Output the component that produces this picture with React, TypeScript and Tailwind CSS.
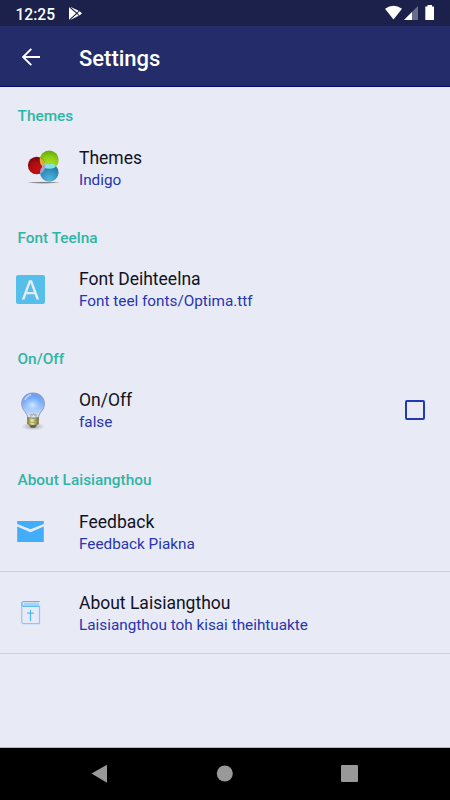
import type { ReactNode } from "react";

function ThemesIcon() {
  return (
    <svg viewBox="0 127 79 81" className="h-[81px] w-[79px] shrink-0">
      <defs>
        <radialGradient id="green" cx="50%" cy="85%" r="85%">
          <stop offset="0" stopColor="#b4ea22" />
          <stop offset=".6" stopColor="#8fcf14" />
          <stop offset="1" stopColor="#62a80a" />
        </radialGradient>
        <radialGradient id="red" cx="55%" cy="75%" r="75%">
          <stop offset="0" stopColor="#c80f14" />
          <stop offset=".6" stopColor="#a90c10" />
          <stop offset="1" stopColor="#780508" />
        </radialGradient>
        <radialGradient id="blue" cx="50%" cy="90%" r="85%">
          <stop offset="0" stopColor="#55b7dc" />
          <stop offset=".6" stopColor="#318fbd" />
          <stop offset="1" stopColor="#1f729f" />
        </radialGradient>
        <radialGradient id="floor">
          <stop offset="0" stopColor="#777" />
          <stop offset=".65" stopColor="#999" />
          <stop offset="1" stopColor="#bbb" stopOpacity="0" />
        </radialGradient>
        <clipPath id="redClip"><circle cx="36.7" cy="165.5" r="8.8" /></clipPath>
        <clipPath id="blueClip"><circle cx="49.3" cy="172.5" r="9.3" /></clipPath>
      </defs>
      <ellipse cx="43.5" cy="182.6" rx="17" ry="1.2" fill="url(#floor)" />
      <circle cx="49.2" cy="160" r="9.5" fill="url(#green)" />
      <circle cx="36.7" cy="165.5" r="8.8" fill="url(#red)" />
      <circle cx="49.3" cy="172.5" r="9.3" fill="url(#blue)" />
      <circle cx="49.2" cy="160" r="9.5" fill="#d8ae35" clipPath="url(#redClip)" />
      <ellipse cx="49.3" cy="166" rx="6.6" ry="2.8" fill="#83e3df" />
      <circle cx="36.7" cy="165.5" r="8.8" fill="#ad9dcc" clipPath="url(#blueClip)" />
    </svg>
  );
}

function FontIcon() {
  return (
    <svg viewBox="0 248 79 81" className="h-[81px] w-[79px] shrink-0">
      <rect x="16" y="274" width="29" height="29" rx="2" fill="#55bfea" />
      <path d="M21.8 298.4 29 279.2H32L39.2 298.4H36.5L34.6 293.2H26.4L24.5 298.4ZM27.2 291H33.8L30.5 281.9Z" fill="#e8eaf6" fillRule="evenodd" />
    </svg>
  );
}

function BulbIcon() {
  return (
    <svg viewBox="0 369 79 81" className="h-[81px] w-[79px] shrink-0">
      <defs>
        <linearGradient id="glass" x1="0" y1="0" x2="0" y2="1">
          <stop offset="0" stopColor="#6b9cf0" />
          <stop offset=".4" stopColor="#80b0fb" />
          <stop offset=".75" stopColor="#b0d0fc" />
          <stop offset="1" stopColor="#e3e8ef" />
        </linearGradient>
        <radialGradient id="glow">
          <stop offset="0" stopColor="#cfe8ff" />
          <stop offset="1" stopColor="#a8d0ff" stopOpacity="0" />
        </radialGradient>
        <linearGradient id="brass">
          <stop offset="0" stopColor="#77712b" />
          <stop offset=".4" stopColor="#eeebad" />
          <stop offset="1" stopColor="#6c6732" />
        </linearGradient>
        <radialGradient id="bulbShadow">
          <stop offset="0" stopColor="#777" stopOpacity=".65" />
          <stop offset="1" stopColor="#888" stopOpacity="0" />
        </radialGradient>
      </defs>
      <ellipse cx="33" cy="425.5" rx="12" ry="4" fill="url(#bulbShadow)" />
      <path d="M27.7 417C27.5 411.5 21.7 409.5 21.7 402.8C21.7 396 26.5 392 33 392S44.4 396 44.4 402.8C44.4 409.5 38.7 411.5 38.4 417Z" fill="url(#glass)" stroke="#9697b3" strokeWidth="1" />
      <ellipse cx="32.5" cy="404" rx="9" ry="8" fill="url(#glow)" />
      <path d="M25 399Q26.5 394.8 31 393.8" fill="none" stroke="#bed8ff" strokeWidth="1.4" />
      <path d="M31 416V413L32.3 414.5 33.5 412.5 34.8 414.5 36 413V416" fill="none" stroke="#a09b84" strokeWidth=".8" />
      <path d="M27.5 416.5Q33 418.5 38.5 416.5V423Q33 426 27.5 423Z" fill="url(#brass)" stroke="#77723d" strokeWidth=".6" />
      <path d="M28 420.5Q33 422.5 38 420.5" fill="none" stroke="#a29e4d" strokeWidth=".8" />
      <path d="M29 424.2H37L35 426.8H31Z" fill="#5c5c55" />
    </svg>
  );
}

function MailIcon() {
  return (
    <svg viewBox="0 491 79 81" className="h-[81px] w-[79px] shrink-0">
      <path d="M17.2 521H43.8V524L30.5 529.3 17.2 524ZM17.2 526.5 30.5 532.2 43.8 526.5V542H17.2Z" fill="#42adfa" />
    </svg>
  );
}

function BookIcon() {
  return (
    <svg viewBox="0 572 79 81" className="h-[81px] w-[79px] shrink-0" fill="none">
      <rect x="24" y="602.5" width="15" height="3" fill="#a6d4fa" />
      <path d="M39.7 601.5H24Q21.7 601.5 21.7 604V621.5Q21.7 623.7 24 623.7H39.5V606.3H24Q21.7 606.3 21.7 604" stroke="#8cc9fa" strokeWidth="1.2" />
      <path d="M39.7 601.5H24Q22 601.5 21.7 604Q22 606.3 24 606.3H39.5" stroke="#50b7f8" strokeWidth=".9" />
      <path d="M30.5 610V621M27.2 613.2H33.8" stroke="#49b9f6" strokeWidth="1.2" />
    </svg>
  );
}

function Category({ children }: { children: string }) {
  return <h2 className="h-[40.3px] pl-[17.5px] pt-[17.3px] text-[15.4px] leading-[24px] font-medium text-[#30b5a5]">{children}</h2>;
}

function Row({ icon, title, summary, children }: { icon: ReactNode; title: string; summary: string; children?: ReactNode }) {
  return (
    <div className="flex h-[81px] items-center">
      {icon}
      <div className="flex-1 pt-[2px]">
        <div className="text-[17.5px] leading-[22px] text-[#10131f]">{title}</div>
        <div className="text-[15.3px] leading-[22px] text-[#2636ad]">{summary}</div>
      </div>
      {children}
    </div>
  );
}

export default function App() {
  return (
    <div className="flex h-[800px] w-[450px] flex-col overflow-hidden bg-[#e8eaf6] font-['Roboto',sans-serif]">
      <div className="flex h-[26px] shrink-0 items-center bg-[#1b214a] pl-[15.5px] text-white">
        <span className="w-[52px] pt-[3px] text-[15.6px] leading-[22px] font-medium">12:25</span>
        <svg viewBox="67 0 16 26" className="h-[26px] w-[16px]">
          <path d="M68 7.2V19.7L75 13.3ZM69.2 6.8 75.9 12.5 77.7 10.8ZM69.2 20.1 77.7 15.7 75.9 14.1ZM78.5 11.2 76.5 13.3 78.5 15.4 81 13.3Z" fill="#fff" />
        </svg>
        <svg viewBox="380 0 70 26" className="ml-auto h-[26px] w-[70px]">
          <path d="M385 8.7Q393.5 3 402 8.7L393.5 19.5Z" fill="#fff" />
          <path d="M404 20 418 6V20Z" fill="#6a6e89" />
          <path d="M404 20 412 12V20Z" fill="#fff" />
          <path d="M427.5 5H432V6.5H434V20H425.3V6.5H427.5Z" fill="#fff" />
        </svg>
      </div>
      <header className="flex h-[61px] shrink-0 items-center border-b border-[#08096b] bg-[#242d69] text-white">
        <svg viewBox="0 26 79 61" className="h-[61px] w-[79px] shrink-0" fill="none" stroke="#fff" strokeWidth="1.9">
          <path d="M40 57H23.2M31.3 48.8 23.1 57 31.3 65.2" />
        </svg>
        <h1 className="pt-[5px] text-[22px] leading-[28px] font-medium">Settings</h1>
      </header>
      <main className="flex-1 border-b border-[#b6b7c2]">
        <Category>Themes</Category>
        <Row icon={<ThemesIcon />} title="Themes" summary="Indigo" />
        <Category>Font Teelna</Category>
        <Row icon={<FontIcon />} title="Font Deihteelna" summary="Font teel fonts/Optima.ttf" />
        <Category>On/Off</Category>
        <Row icon={<BulbIcon />} title="On/Off" summary="false">
          <span className="mr-[25px] h-5 w-5 rounded-[2px] border-2 border-[#2039b4]" />
        </Row>
        <Category>About Laisiangthou</Category>
        <Row icon={<MailIcon />} title="Feedback" summary="Feedback Piakna" />
        <div className="-mt-px border-y border-[#cdcfdc]">
          <Row icon={<BookIcon />} title="About Laisiangthou" summary="Laisiangthou toh kisai theihtuakte" />
        </div>
      </main>
      <nav className="h-[52px] shrink-0 bg-black">
        <svg viewBox="0 748 450 52" className="h-[52px] w-[450px]" fill="#999">
          <path d="M91.5 773.5 107 764.7V782.7Z" />
          <circle cx="224.8" cy="773.5" r="8" />
          <rect x="341" y="765" width="17" height="17" rx="1" />
        </svg>
      </nav>
    </div>
  );
}
